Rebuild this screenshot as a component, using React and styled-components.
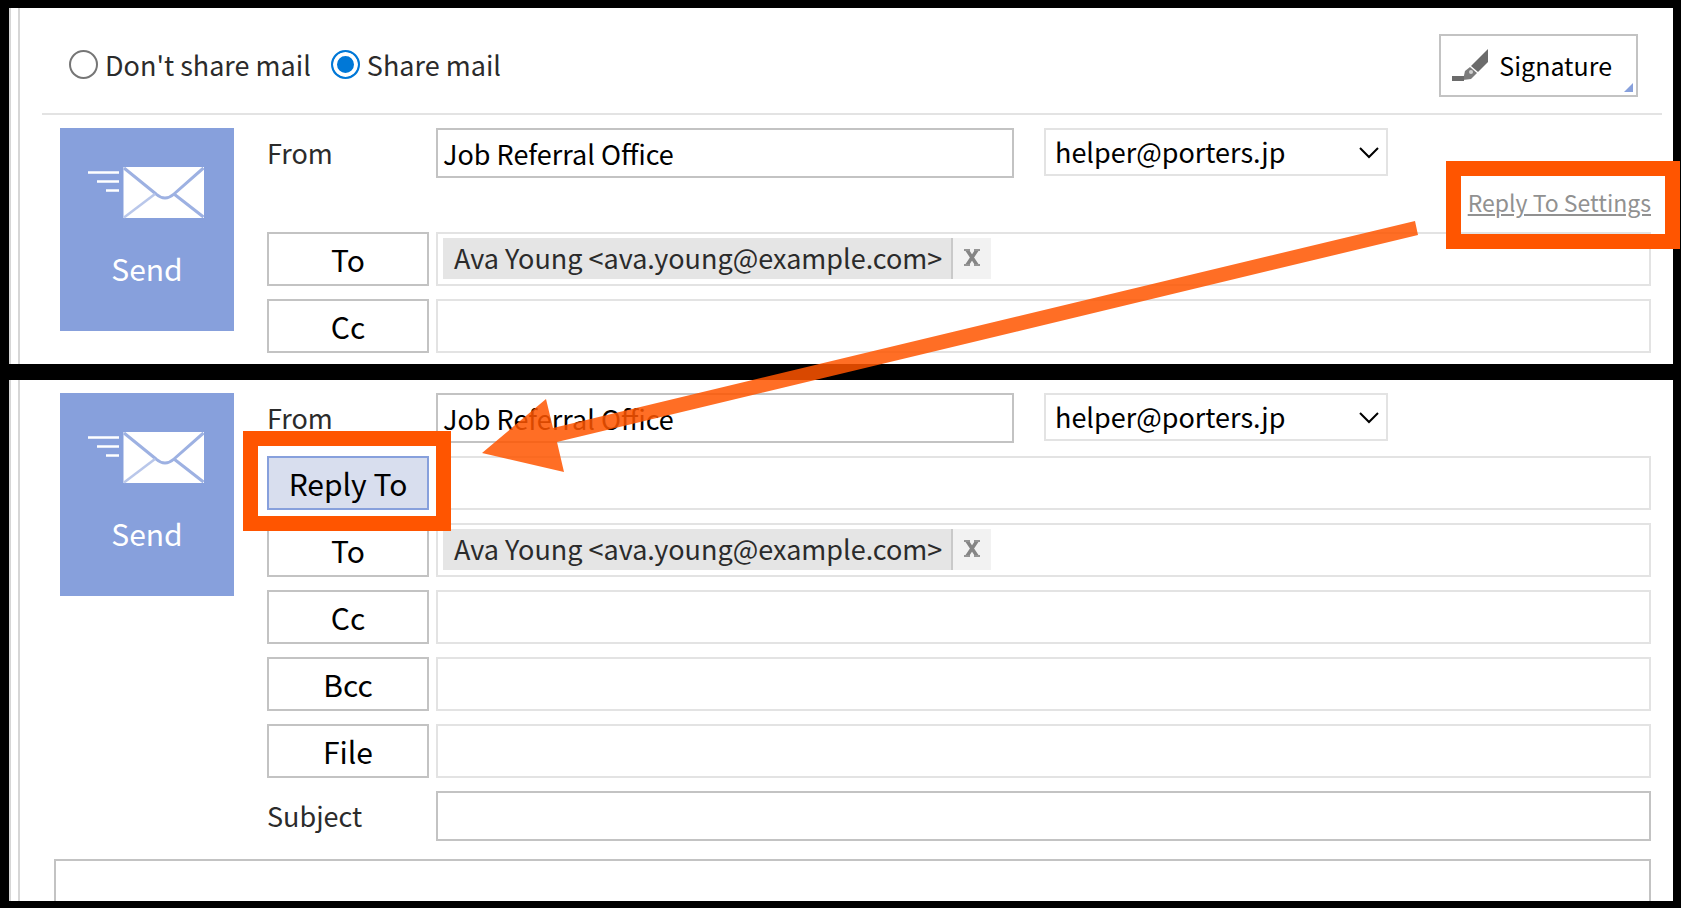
import React, { useState } from 'react';
import styled, { createGlobalStyle, css } from 'styled-components';

const GlobalStyle = createGlobalStyle`
    *, *::before, *::after {
        box-sizing: border-box;
    }

    body {
        margin: 0;
        background-color: #000;
    }

    body, button, input, select, textarea {
        font-family: "Noto Sans CJK JP", "Noto Sans", sans-serif;
    }
`;

const SendButton = () => (
    <Send type="button">
        <svg width="118" height="56" viewBox="0 0 118 56" aria-hidden="true">
            <path d="M0 6.5h31M9 15.5h22M18 24.5h13" stroke="#fff" strokeWidth="2.5" />
            <rect x="35.5" y="1" width="80.5" height="51" fill="#fff" />
            <path d="M36 2L68 28Q77 36 86 28L115.5 2M86 28L115.5 51" fill="none" stroke="#9db1e2" strokeWidth="3" />
            <path d="M36 51.5L67 28" fill="none" stroke="#b9c7ea" strokeWidth="2.5" />
        </svg>
        <span>Send</span>
    </Send>
);

const FromRow = ({ id }) => {
    const [name, setName] = useState("Job Referral Office");

    return (
        <Row>
            <Label htmlFor={ `${id}-from` }>From</Label>
            <FromInput id={ `${id}-from` } type="text" value={ name } onChange={ e => setName(e.target.value) } />
            <SelectWrap>
                <Select aria-label="From address" defaultValue="helper">
                    <option value="helper">helper@porters.jp</option>
                </Select>
                <Chevron viewBox="0 0 20 12" aria-hidden="true">
                    <path d="M1 1l9 9l9-9" fill="none" stroke="#000" strokeWidth="2" />
                </Chevron>
            </SelectWrap>
        </Row>
    );
};

const AddressRow = ({ label, recipient, active }) => (
    <Row>
        {
            active ? (
                <Marked $around="button">
                    <PickButton type="button" $active>{ label }</PickButton>
                </Marked>
            ) : (
                <PickButton type="button">{ label }</PickButton>
            )
        }
        <Field>
            { recipient && (
                <Chip>
                    <ChipText>{ recipient }</ChipText>
                    <ChipRemove type="button" aria-label={ `Remove ${recipient}` }>
                        <svg width="16" height="17" viewBox="0 0 16 17" aria-hidden="true">
                            <path d="M3 1L13 16M13 1L3 16" stroke="#858585" strokeWidth="3.5" />
                            <path d="M0 1h6M10 1h6M0 16h6M10 16h6" stroke="#959595" strokeWidth="2" />
                        </svg>
                    </ChipRemove>
                </Chip>
            ) }
        </Field>
    </Row>
);

const recipient = "Ava Young <ava.young@example.com>";

const App = () => {
    const [share, setShare] = useState("share");

    return (
        <Page>
            <GlobalStyle />
            <Panel>
                <Toolbar>
                    <Radios>
                        <RadioLabel>
                            <Radio type="radio" name="share" checked={ share === "private" } onChange={ () => setShare("private") } />
                            Don't share mail
                        </RadioLabel>
                        <RadioLabel>
                            <Radio type="radio" name="share" checked={ share === "share" } onChange={ () => setShare("share") } />
                            Share mail
                        </RadioLabel>
                    </Radios>
                    <SignatureButton type="button">
                        <svg width="36" height="33" viewBox="0 0 36 33" aria-hidden="true">
                            <path d="M36 0V13L26 23L19 17Z" fill="#6b6b6b" />
                            <path d="M18 18L25 24L19 30L11 31L13 22Z" fill="#7c7c7c" />
                            <circle cx="19" cy="23" r="2" fill="#d0d0d0" />
                            <rect x="0" y="27" width="12" height="5" fill="#6b6b6b" />
                        </svg>
                        Signature
                    </SignatureButton>
                </Toolbar>
                <Compose>
                    <SendButton />
                    <Rows>
                        <FromRow id="top" />
                        <SettingsRow>
                            <Marked $around="link">
                                <SettingsLink href="#reply-to">Reply To Settings</SettingsLink>
                            </Marked>
                        </SettingsRow>
                        <AddressRow label="To" recipient={ recipient } />
                        <AddressRow label="Cc" />
                    </Rows>
                </Compose>
            </Panel>
            <Panel>
                <Compose id="reply-to">
                    <SendButton />
                    <Rows>
                        <FromRow id="bottom" />
                        <AddressRow label="Reply To" active />
                        <AddressRow label="To" recipient={ recipient } />
                        <AddressRow label="Cc" />
                        <AddressRow label="Bcc" />
                        <AddressRow label="File" />
                        <Row>
                            <Label htmlFor="subject">Subject</Label>
                            <SubjectInput id="subject" type="text" />
                        </Row>
                    </Rows>
                </Compose>
                <MailBody aria-label="Message" />
            </Panel>
            <Arrow viewBox="0 0 936 251" preserveAspectRatio="none" aria-hidden="true">
                <path d="M0 232L64 178L71 207L933 0L936 14L75 221L82 251Z" fill="#ff5500" />
            </Arrow>
        </Page>
    );
};

const Page = styled.main`
    position: relative;
    display: flex;
    flex-direction: column;
    gap: 16px;
    padding: 8px 8px 7px 9px;
    color: #2b2b2b;
    font-size: 27px;
    line-height: 40px;
`;

const Panel = styled.section`
    padding-left: 9px;
    background:
        linear-gradient(#d6d6d6, #d6d6d6) 0 0 / 2px 100% no-repeat,
        linear-gradient(#d6d6d6, #d6d6d6) 9px 0 / 2px 100% no-repeat,
        #fff;
`;

const Toolbar = styled.div`
    display: flex;
    align-items: center;
    justify-content: space-between;
    height: 107px;
    margin: 0 11px 0 24px;
    padding: 0 24px 0 27px;
    border-bottom: 2px solid #e3e3e3;
`;

const Radios = styled.div`
    display: flex;
    gap: 20px;
    padding-top: 8px;
`;

const RadioLabel = styled.label`
    display: flex;
    align-items: center;
    gap: 7px;
`;

const Radio = styled.input`
    appearance: none;
    width: 29px;
    height: 29px;
    margin: 0;
    border: 2px solid #767676;
    border-radius: 50%;
    background-color: #fff;

    &:checked {
        border-color: #0078d7;
        background-color: #0078d7;
        box-shadow: inset 0 0 0 4px #fff;
    }
`;

const SignatureButton = styled.button`
    position: relative;
    display: flex;
    align-items: center;
    gap: 11px;
    height: 63px;
    margin-top: 9px;
    padding: 0 24px 0 11px;
    border: 2px solid #c3c3c3;
    background-color: #fff;
    color: #000;
    font-size: 25px;

    &::after {
        content: "";
        position: absolute;
        right: 3px;
        bottom: 3px;
        border-left: 9px solid transparent;
        border-bottom: 9px solid #87a0dc;
    }
`;

const Compose = styled.div`
    display: flex;
    align-items: flex-start;
    gap: 33px;
    padding: 13px 22px 11px 42px;
`;

const Send = styled.button`
    flex: none;
    display: flex;
    flex-direction: column;
    align-items: center;
    gap: 24px;
    width: 174px;
    height: 203px;
    padding: 38px 0 0;
    border: none;
    background-color: #87a0dc;
    color: #fff;
    font-size: 30px;
    line-height: 44px;
`;

const Rows = styled.div`
    flex: 1;
    display: flex;
    flex-direction: column;
    gap: 13px;
    min-width: 0;
`;

const Row = styled.div`
    display: flex;
    gap: 7px;
`;

const Label = styled.label`
    flex: none;
    width: 162px;
    line-height: 50px;
`;

const textBox = css`
    height: 50px;
    padding: 0 5px;
    border: 2px solid #c3c3c3;
    border-radius: 0;
    background-color: #fff;
    color: #000;
    font-size: 27px;
`;

const FromInput = styled.input`
    ${textBox}
    width: 578px;
    min-width: 0;
`;

const SubjectInput = styled.input`
    ${textBox}
    flex: 1;
    min-width: 0;
`;

const SelectWrap = styled.div`
    position: relative;
    width: 344px;
    margin-left: 23px;
`;

const Select = styled.select`
    appearance: none;
    width: 100%;
    height: 48px;
    padding: 0 40px 2px 9px;
    border: 2px solid #e3e3e3;
    border-radius: 0;
    background-color: #fff;
    color: #000;
    font-size: 27px;
`;

const Chevron = styled.svg`
    position: absolute;
    top: 19px;
    right: 9px;
    width: 20px;
    height: 12px;
    pointer-events: none;
`;

const PickButton = styled.button`
    flex: none;
    width: 162px;
    height: 54px;
    padding: 0;
    border: 2px solid ${({ $active }) => $active ? "#87a0dc" : "#c3c3c3"};
    background-color: ${({ $active }) => $active ? "#d8deee" : "#fff"};
    color: #000;
    font-size: 30px;
    line-height: 44px;
`;

const Field = styled.div`
    flex: 1;
    display: flex;
    align-items: flex-start;
    min-width: 0;
    height: 54px;
    padding: 4px 5px;
    border: 2px solid #e3e3e3;
`;

const Chip = styled.span`
    display: flex;
    height: 41px;
    line-height: 40px;
`;

const ChipText = styled.span`
    padding: 0 9px 0 11px;
    border-right: 2px solid #c9c9c9;
    background-color: #e5e5e5;
    white-space: nowrap;
`;

const ChipRemove = styled.button`
    display: flex;
    width: 38px;
    padding: 11px 0 0 11px;
    border: none;
    background-color: #f2f2f2;
`;

const SettingsRow = styled.div`
    display: flex;
    align-items: flex-start;
    justify-content: flex-end;
    height: 28px;
`;

const SettingsLink = styled.a`
    color: #919191;
    font-size: 23px;
    line-height: 22px;
`;

// orange frame drawn around the control it wraps
const Marked = styled.span`
    position: relative;
    display: flex;

    &::after {
        content: "";
        position: absolute;
        z-index: 1;
        inset: ${({ $around }) => $around === "link" ? "-30px -29px -36px -22px" : "-25px -22px -21px -24px"};
        border: 15px solid #ff5500;
        pointer-events: none;
    }
`;

const MailBody = styled.textarea`
    display: block;
    width: calc(100% - 58px);
    height: 42px;
    margin: 7px 22px 0 36px;
    padding: 6px;
    border: 2px solid #c3c3c3;
    border-bottom: none;
    border-radius: 0;
    background-color: #fff;
    font-size: 27px;
    resize: none;
`;

const Arrow = styled.svg`
    position: absolute;
    z-index: 2;
    top: 221px;
    left: 482px;
    width: calc(100% - 745px);
    height: 251px;
    opacity: 0.85;
    pointer-events: none;
`;

export default App;
